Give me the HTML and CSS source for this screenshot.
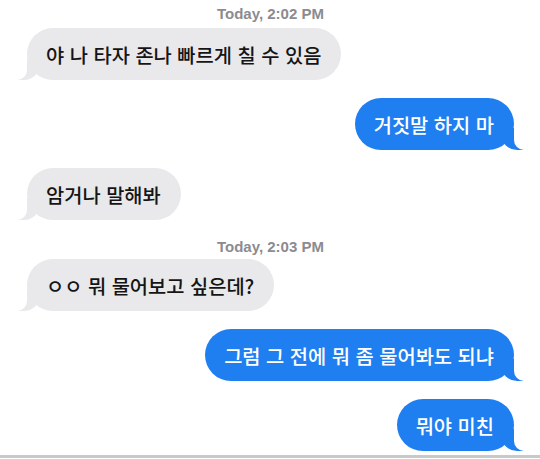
FILE: index.html
```html
<!DOCTYPE html>
<html lang="ko">
    <head>
        <meta charset="UTF-8" />
        <meta name="viewport" content="width=device-width, initial-scale=1.0" />
        <title>Messages</title>
        <link rel="stylesheet" href="styles.css">
    </head>
    <body>
        <div class="chat">
            <div class="stamp">Today, 2:02 PM</div>
            <div class="row them"><div class="bubble">야 나 타자 존나 빠르게 칠 수 있음</div></div>
            <div class="row me"><div class="bubble">거짓말 하지 마</div></div>
            <div class="row them"><div class="bubble">암거나 말해봐</div></div>

            <div class="stamp later">Today, 2:03 PM</div>
            <div class="row them"><div class="bubble">ㅇㅇ 뭐 물어보고 싶은데?</div></div>
            <div class="row me"><div class="bubble">그럼 그 전에 뭐 좀 물어봐도 되냐</div></div>
            <div class="row me"><div class="bubble">뭐야 미친</div></div>
        </div>
        <div class="bottom-line"></div>
    </body>
</html>
```
FILE: styles.css
```css
body {
    margin: 0;
    background: #ffffff;
    font-family: "Noto Sans CJK KR", "Noto Sans", sans-serif;
    overflow: hidden;
}
.chat {
    display: flex;
    flex-direction: column;
    gap: 18px;
    padding: 4px 26px 0 27px;
}
.stamp {
    text-align: center;
    font-family: "Liberation Sans", Arial, sans-serif;
    font-weight: bold;
    font-size: 15px;
    line-height: 20px;
    color: #8b8b90;
    margin-bottom: -14px;
    padding-left: 0;
}
.stamp.later {
    margin-top: -1px;
    margin-bottom: -16px;
}
.row {
    display: flex;
}
.row.me {
    justify-content: flex-end;
}
.bubble {
    position: relative;
    height: 52px;
    display: flex;
    align-items: center;
    padding: 0 20px 0 19px;
    border-radius: 26px;
    font-size: 19.8px;
    font-weight: 500;
    white-space: nowrap;
}
.them .bubble {
    background: #e9e9eb;
    color: #151515;
}
.me .bubble {
    background: #1f7ff0;
    color: #ffffff;
}
.bubble::before,
.bubble::after {
    content: "";
    position: absolute;
    bottom: 0;
    height: 22px;
}
.them .bubble::before {
    left: -9px;
    width: 22px;
    background: #e9e9eb;
    border-bottom-right-radius: 16px;
}
.them .bubble::after {
    left: -12px;
    width: 12px;
    background: #ffffff;
    border-bottom-right-radius: 10px;
}
.me .bubble::before {
    right: -9px;
    width: 22px;
    background: #1f7ff0;
    border-bottom-left-radius: 16px;
}
.me .bubble::after {
    right: -12px;
    width: 12px;
    background: #ffffff;
    border-bottom-left-radius: 10px;
}
.bottom-line {
    margin-top: 4px;
    height: 3px;
    background: #c9c9c9;
}
```
